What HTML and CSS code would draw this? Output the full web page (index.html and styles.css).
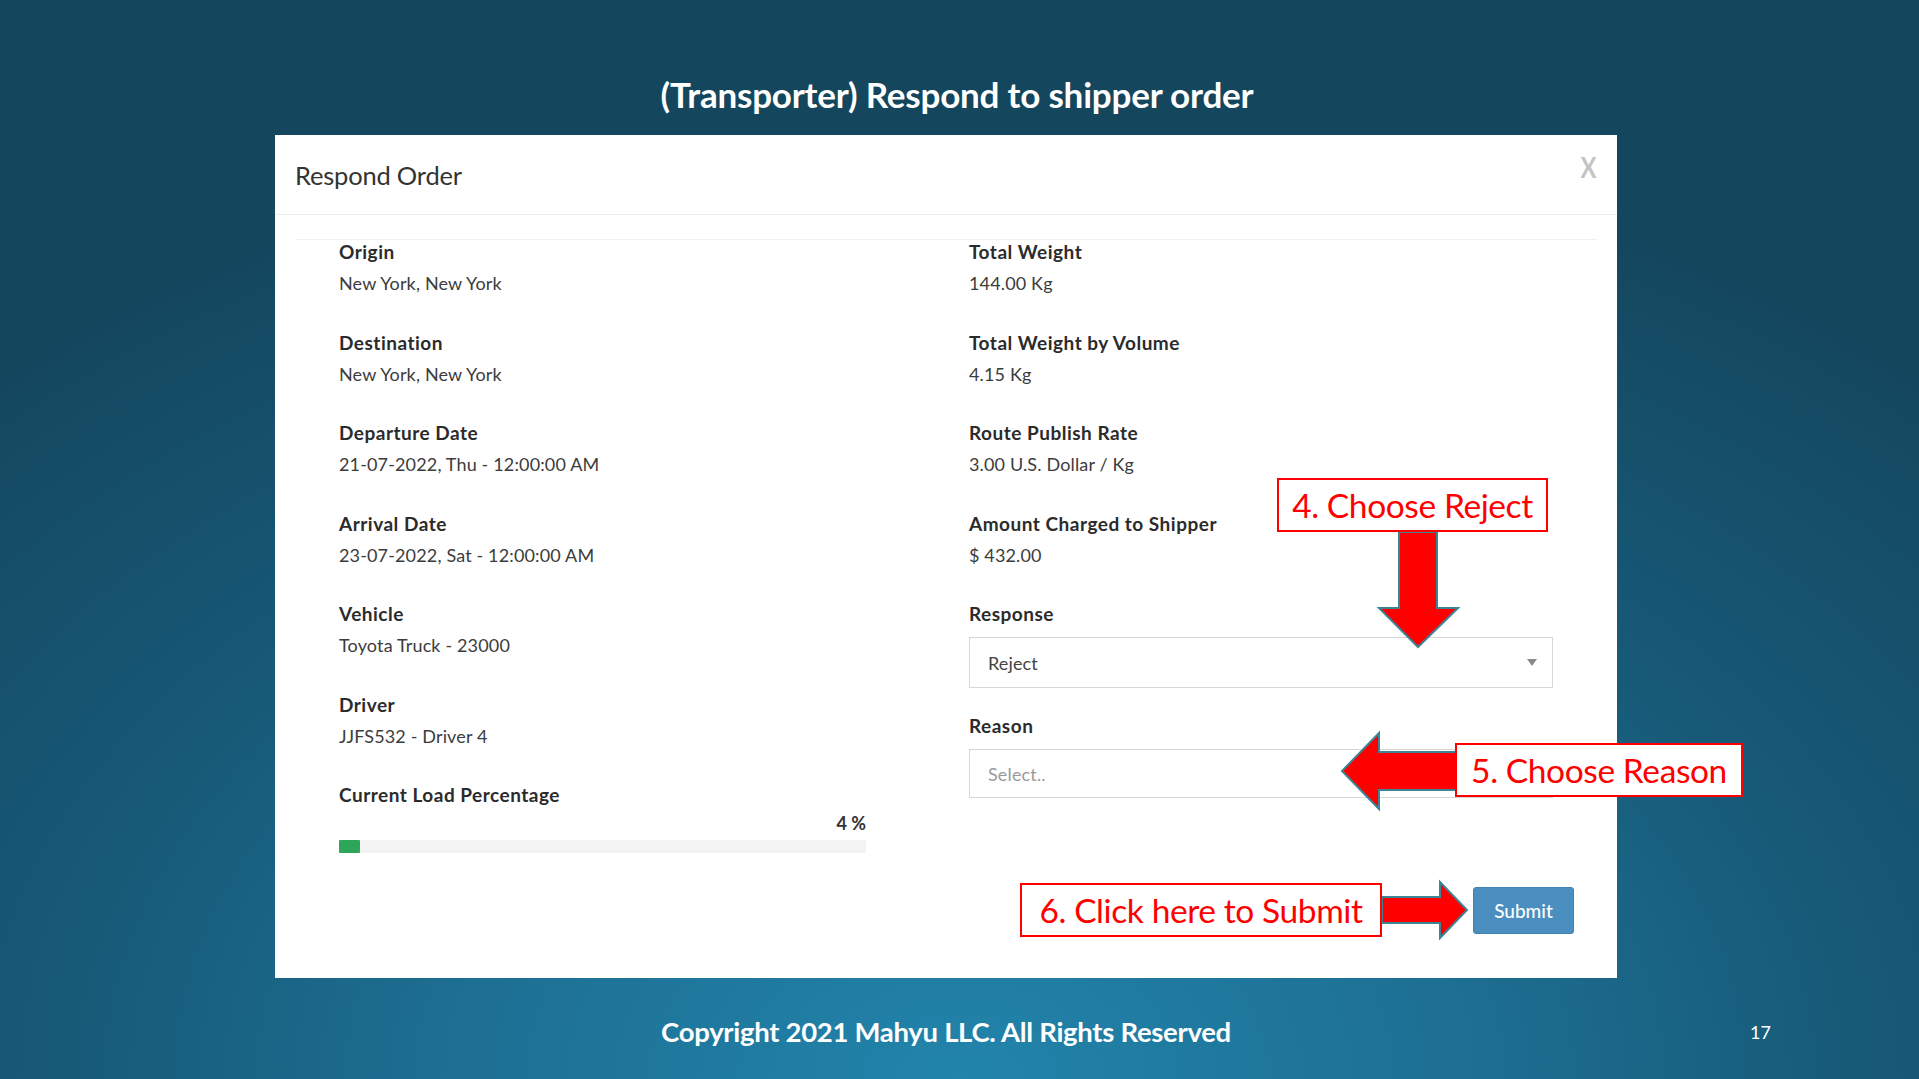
FILE: index.html
```html
<!DOCTYPE html>
<html>
<head>
<meta charset="utf-8">
<title>Respond Order</title>
<link rel="stylesheet" href="styles.css">
</head>
<body>
<div class="slide">
  <h1 class="title">(Transporter) Respond to shipper order</h1>

  <div class="modal">
    <div class="modal-header">
      <div class="modal-title">Respond Order</div>
      <div class="close">X</div>
    </div>
    <div class="modal-body">
      <div class="divider"></div>
      <div class="grid">
        <div class="col-left">
          <div class="field"><div class="label">Origin</div><div class="value">New York, New York</div></div>
          <div class="field"><div class="label">Destination</div><div class="value">New York, New York</div></div>
          <div class="field"><div class="label">Departure Date</div><div class="value">21-07-2022, Thu - 12:00:00 AM</div></div>
          <div class="field"><div class="label">Arrival Date</div><div class="value">23-07-2022, Sat - 12:00:00 AM</div></div>
          <div class="field"><div class="label">Vehicle</div><div class="value">Toyota Truck - 23000</div></div>
          <div class="field"><div class="label">Driver</div><div class="value">JJFS532 - Driver 4</div></div>
          <div class="load">
            <div class="label">Current Load Percentage</div>
            <div class="pct">4 %</div>
            <div class="bar"><div class="bar-fill" style="width:4%"></div></div>
          </div>
        </div>
        <div class="col-right">
          <div class="field"><div class="label">Total Weight</div><div class="value">144.00 Kg</div></div>
          <div class="field"><div class="label">Total Weight by Volume</div><div class="value">4.15 Kg</div></div>
          <div class="field"><div class="label">Route Publish Rate</div><div class="value">3.00 U.S. Dollar / Kg</div></div>
          <div class="field"><div class="label">Amount Charged to Shipper</div><div class="value">$ 432.00</div></div>
          <div class="label">Response</div>
          <div class="select select-response"><span>Reject</span><span class="caret"></span></div>
          <div class="label label-reason">Reason</div>
          <div class="select select-reason"><span class="placeholder">Select..</span></div>
          <div class="actions"><button class="btn-submit">Submit</button></div>
        </div>
      </div>
    </div>
  </div>

  <div class="footer">
    <div class="copy">Copyright 2021 Mahyu LLC. All Rights Reserved</div>
    <div class="page-no">17</div>
  </div>

  <svg class="arrow arrow-down" width="84" height="122" viewBox="0 0 84 122">
    <polygon points="23,4 61,4 61,80 82,80 42,119 3,80 23,80"/>
  </svg>
  <svg class="arrow arrow-left" width="122" height="84" viewBox="0 0 122 84">
    <polygon points="4,42 41,4 41,23 120,23 120,61 41,61 41,80"/>
  </svg>
  <svg class="arrow arrow-right" width="93" height="64" viewBox="0 0 93 64">
    <polygon points="4,19 62,19 62,4 89,32 62,60 62,45 4,45"/>
  </svg>

  <div class="note note-reject">4. Choose Reject</div>
  <div class="note note-reason">5. Choose Reason</div>
  <div class="note note-submit">6. Click here to Submit</div>
</div>
</body>
</html>
```
FILE: styles.css
```css
html, body {
  margin: 0;
  padding: 0;
}

body {
  width: 1919px;
  height: 1079px;
  overflow: hidden;
}

.slide {
  position: relative;
  width: 1919px;
  height: 1079px;
  box-sizing: border-box;
  padding-top: 75px;
  display: flex;
  flex-direction: column;
  align-items: flex-start;
  background: radial-gradient(ellipse 75% 90% at 50% 100%, #2284ab 0%, #1d6f93 35%, #175a78 62%, #14465d 100%);
  font-family: Lato, "Open Sans", sans-serif;
}

.title {
  margin: 0 0 21px 0;
  width: 1914px;
  text-align: center;
  color: #ffffff;
  font-family: Lato, "Open Sans", sans-serif;
  font-weight: 700;
  font-size: 35px;
  line-height: 39px;
  letter-spacing: -0.2px;
}

.modal {
  margin-left: 275px;
  width: 1342px;
  background: #ffffff;
}

.modal-header {
  height: 79px;
  border-bottom: 1px solid #ececec;
  display: flex;
  align-items: center;
  justify-content: space-between;
  padding: 0 19px 0 20px;
}

.modal-title {
  font-size: 25.5px;
  color: #333333;
  letter-spacing: -0.2px;
}

.close {
  align-self: flex-start;
  margin-top: 15px;
  font-size: 28px;
  font-weight: 700;
  color: #c4c4c4;
  transform: scaleX(0.85);
}

.modal-body {
  padding: 24px 20px 44px 20px;
}

.divider {
  border-top: 1px solid #f1f1f1;
}

.grid {
  display: grid;
  grid-template-columns: 630px 1fr;
  padding-left: 44px;
}

.field {
  height: 90.5px;
}

.label {
  font-size: 19px;
  line-height: 24px;
  font-weight: 700;
  color: #2b2b2b;
  letter-spacing: 0.5px;
}

.value {
  margin-top: 7px;
  font-size: 18px;
  line-height: 24px;
  color: #3c3c3c;
  letter-spacing: 0.15px;
}

.load {
  width: 527px;
}

.pct {
  margin-top: 4px;
  text-align: right;
  font-size: 18px;
  line-height: 24px;
  font-weight: 700;
  color: #333333;
}

.bar {
  margin-top: 5px;
  height: 13px;
  background: #f3f3f3;
}

.bar-fill {
  height: 13px;
  background: #2ea65a;
  border-radius: 1px;
}

.select {
  box-sizing: border-box;
  width: 584px;
  margin-top: 11px;
  border: 1px solid #d6d6d6;
  padding: 0 18px 0 18px;
  display: flex;
  align-items: center;
  justify-content: space-between;
  font-size: 18px;
  color: #444444;
  letter-spacing: 0.15px;
}

.select-response {
  height: 51px;
}

.select-reason {
  height: 49px;
}

.placeholder {
  color: #9a9a9a;
}

.caret {
  width: 0;
  height: 0;
  border-left: 5px solid transparent;
  border-right: 5px solid transparent;
  border-top: 7px solid #8a8a8a;
  margin-right: -3px;
}

.label-reason {
  margin-top: 26px;
}

.actions {
  margin-top: 89px;
  padding-right: 23px;
  display: flex;
  justify-content: flex-end;
}

.btn-submit {
  width: 101px;
  height: 47px;
  border: 1px solid #3f83b3;
  border-radius: 3px;
  background: #4a8fbf;
  color: #ffffff;
  font-family: Lato, "Open Sans", sans-serif;
  font-size: 19px;
  font-weight: 500;
}

.footer {
  margin-top: 37px;
  width: 1892px;
  display: grid;
  grid-template-columns: 1fr;
  align-items: center;
}

.copy, .page-no {
  grid-area: 1 / 1;
  color: #ffffff;
}

.copy {
  justify-self: center;
  font-size: 27.5px;
  line-height: 34px;
  font-weight: 700;
  letter-spacing: -0.3px;
}

.page-no {
  justify-self: end;
  margin-right: 121px;
  font-size: 18px;
}

.arrow {
  position: absolute;
}

.arrow polygon {
  fill: #ff0000;
  stroke: #3a8494;
  stroke-width: 2;
  stroke-linejoin: miter;
}

.arrow-down {
  left: 1376px;
  top: 528px;
}

.arrow-left {
  left: 1338px;
  top: 729px;
}

.arrow-right {
  left: 1378px;
  top: 878px;
}

.note {
  position: absolute;
  box-sizing: border-box;
  height: 54px;
  border: 2px solid #ff0000;
  background: #ffffff;
  color: #ff0000;
  font-size: 33.5px;
  line-height: 50px;
  text-align: center;
  letter-spacing: -0.4px;
  white-space: nowrap;
}

.note-reject {
  left: 1277px;
  top: 478px;
  width: 271px;
}

.note-reason {
  left: 1455px;
  top: 743px;
  width: 288px;
}

.note-submit {
  left: 1020px;
  top: 883px;
  width: 362px;
}
```
